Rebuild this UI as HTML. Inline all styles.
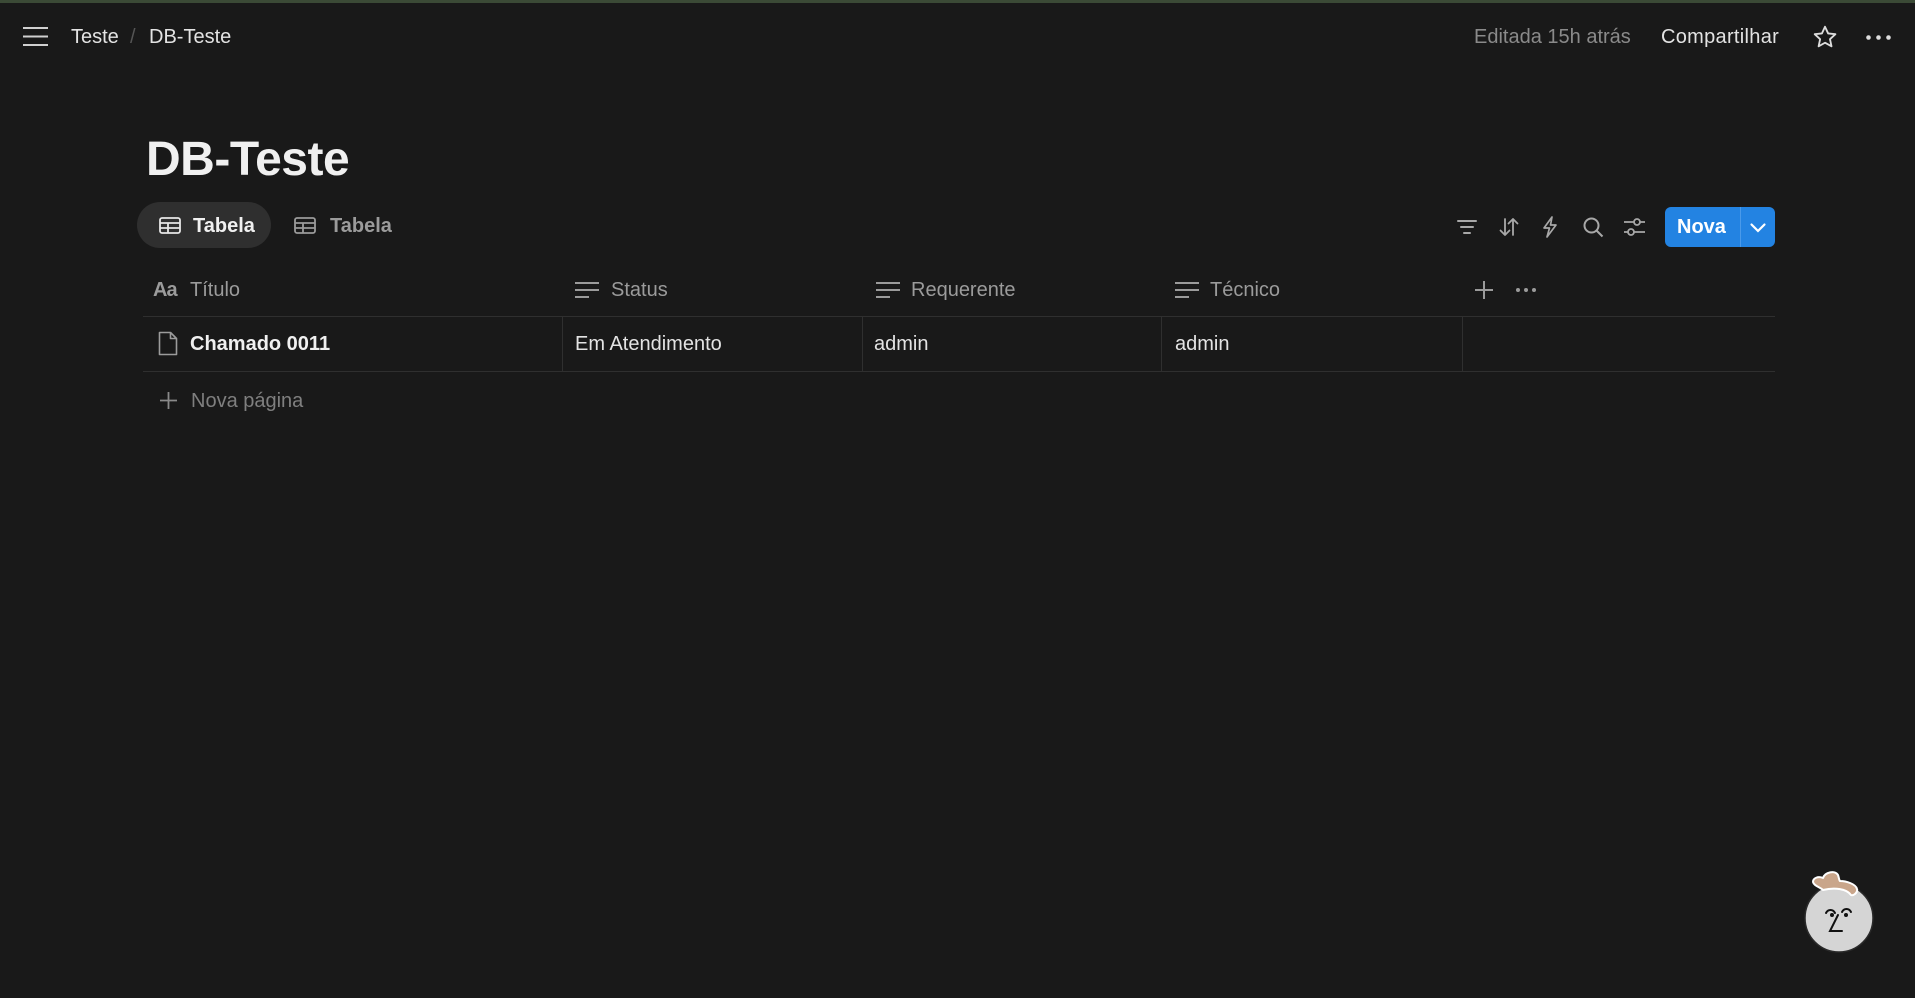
<!DOCTYPE html>
<html><head><meta charset="utf-8"><style>
*{margin:0;padding:0;box-sizing:border-box}
body{width:1915px;height:998px;background:#191919;font-family:"Liberation Sans",sans-serif;color:#e3e3e3;position:relative;overflow:hidden}
.a{position:absolute;white-space:nowrap}
.g{color:#9b9b9b}
svg{position:absolute;overflow:visible}
.vl{position:absolute;top:316px;height:55px;width:1px;background:#2f2f2f}
</style></head><body>
<div class="a" style="left:0;top:0;width:1915px;height:3px;background:#3b4a36"></div>
<svg style="left:23px;top:27px" width="25" height="19"><g stroke="#d0d0d0" stroke-width="2"><line x1="0" y1="1" x2="25" y2="1"/><line x1="0" y1="9.5" x2="25" y2="9.5"/><line x1="0" y1="18" x2="25" y2="18"/></g></svg>
<div class="a" style="left:71px;top:25px;font-size:20px;line-height:24px">Teste</div>
<div class="a" style="left:130px;top:25px;font-size:20px;line-height:24px;color:#555">/</div>
<div class="a" style="left:149px;top:25px;font-size:20px;line-height:24px">DB-Teste</div>
<div class="a g" style="left:1474px;top:25px;font-size:20px;line-height:24px;color:#8a8a8a">Editada 15h atrás</div>
<div class="a" style="left:1661px;top:25px;font-size:20px;line-height:24px;letter-spacing:0.3px">Compartilhar</div>
<svg style="left:1812px;top:24px" width="26" height="26" viewBox="0 0 24 24"><path d="M12 2.5l2.9 6.2 6.7.7-5 4.6 1.4 6.6L12 17.3l-5.9 3.3 1.4-6.6-5-4.6 6.7-.7z" fill="none" stroke="#ddd" stroke-width="1.7" stroke-linejoin="round"/></svg>
<svg style="left:1866px;top:35px" width="26" height="5"><g fill="#ddd"><circle cx="2.5" cy="2.5" r="2.3"/><circle cx="12.5" cy="2.5" r="2.3"/><circle cx="22.5" cy="2.5" r="2.3"/></g></svg>

<div class="a" style="left:146px;top:131px;font-size:48px;line-height:58px;font-weight:bold;color:#f0f0f0;letter-spacing:-0.5px">DB-Teste</div>

<div class="a" style="left:137px;top:202px;width:134px;height:46px;border-radius:23px;background:#2f2f2f"></div>
<svg style="left:159px;top:217px" width="22" height="17"><g fill="none" stroke="#e6e6e6" stroke-width="1.8"><rect x="1" y="1" width="20" height="15" rx="2"/><line x1="1" y1="6" x2="21" y2="6"/><line x1="1" y1="11" x2="21" y2="11"/><line x1="9" y1="6" x2="9" y2="16"/></g></svg>
<div class="a" style="left:193px;top:214px;font-size:20px;line-height:24px;font-weight:bold;color:#f0f0f0">Tabela</div>
<svg style="left:294px;top:217px" width="22" height="17"><g fill="none" stroke="#9b9b9b" stroke-width="1.8"><rect x="1" y="1" width="20" height="15" rx="2"/><line x1="1" y1="6" x2="21" y2="6"/><line x1="1" y1="11" x2="21" y2="11"/><line x1="9" y1="6" x2="9" y2="16"/></g></svg>
<div class="a g" style="left:330px;top:214px;font-size:20px;line-height:24px;font-weight:bold">Tabela</div>

<svg style="left:1457px;top:218px" width="20" height="18"><g stroke="#a8a8a8" stroke-width="2" stroke-linecap="round"><line x1="1" y1="3" x2="19" y2="3"/><line x1="4" y1="9" x2="16" y2="9"/><line x1="7" y1="15" x2="13" y2="15"/></g></svg>
<svg style="left:1499px;top:217px" width="20" height="20"><g fill="none" stroke="#a8a8a8" stroke-width="1.8" stroke-linecap="round" stroke-linejoin="round"><path d="M6 2v16M1.5 13.5L6 18l4.5-4.5"/><path d="M14 18V2M9.5 6.5L14 2l4.5 4.5"/></g></svg>
<svg style="left:1542px;top:216px" width="16" height="22"><path d="M10 1L2 12h5.5L5 21l9-12H8.5z" fill="none" stroke="#a8a8a8" stroke-width="1.7" stroke-linejoin="round"/></svg>
<svg style="left:1583px;top:217px" width="21" height="21"><g fill="none" stroke="#a8a8a8" stroke-width="2"><circle cx="8.5" cy="8.5" r="7"/><line x1="13.5" y1="13.5" x2="19.5" y2="19.5"/></g></svg>
<svg style="left:1624px;top:217px" width="21" height="20"><g fill="none" stroke="#a8a8a8" stroke-width="1.8"><line x1="0" y1="5" x2="21" y2="5"/><line x1="0" y1="15" x2="21" y2="15"/><circle cx="13" cy="5" r="3" fill="#191919"/><circle cx="7" cy="15" r="3" fill="#191919"/></g></svg>
<div class="a" style="left:1665px;top:207px;width:110px;height:40px;border-radius:6px;background:#2383e2"></div>
<div class="a" style="left:1740px;top:207px;width:1px;height:40px;background:#4a9aea"></div>
<div class="a" style="left:1677px;top:215px;font-size:20px;line-height:24px;font-weight:bold;color:#fff">Nova</div>
<svg style="left:1750px;top:223px" width="16" height="10"><path d="M1.5 1.5L8 8l6.5-6.5" fill="none" stroke="#fff" stroke-width="2.2" stroke-linecap="round"/></svg>

<div class="a" style="left:143px;top:316px;width:1632px;height:1px;background:#2f2f2f"></div>
<div class="a" style="left:143px;top:371px;width:1632px;height:1px;background:#2f2f2f"></div>
<div class="vl" style="left:562px"></div><div class="vl" style="left:862px"></div><div class="vl" style="left:1161px"></div><div class="vl" style="left:1462px"></div>

<div class="a g" style="left:153px;top:278px;font-size:20px;line-height:24px;font-weight:bold;letter-spacing:-1px">Aa</div>
<div class="a g" style="left:190px;top:278px;font-size:20px;line-height:24px">Título</div>
<svg style="left:575px;top:281px" width="24" height="18"><g stroke="#9b9b9b" stroke-width="2"><line x1="0" y1="2" x2="24" y2="2"/><line x1="0" y1="9" x2="24" y2="9"/><line x1="0" y1="16" x2="14" y2="16"/></g></svg>
<div class="a g" style="left:611px;top:278px;font-size:20px;line-height:24px">Status</div>
<svg style="left:876px;top:281px" width="24" height="18"><g stroke="#9b9b9b" stroke-width="2"><line x1="0" y1="2" x2="24" y2="2"/><line x1="0" y1="9" x2="24" y2="9"/><line x1="0" y1="16" x2="14" y2="16"/></g></svg>
<div class="a g" style="left:911px;top:278px;font-size:20px;line-height:24px">Requerente</div>
<svg style="left:1175px;top:281px" width="24" height="18"><g stroke="#9b9b9b" stroke-width="2"><line x1="0" y1="2" x2="24" y2="2"/><line x1="0" y1="9" x2="24" y2="9"/><line x1="0" y1="16" x2="14" y2="16"/></g></svg>
<div class="a g" style="left:1210px;top:278px;font-size:20px;line-height:24px">Técnico</div>
<svg style="left:1475px;top:281px" width="18" height="18"><g stroke="#9b9b9b" stroke-width="2"><line x1="9" y1="0" x2="9" y2="18"/><line x1="0" y1="9" x2="18" y2="9"/></g></svg>
<svg style="left:1516px;top:288px" width="20" height="4"><g fill="#9b9b9b"><circle cx="2" cy="2" r="2"/><circle cx="10" cy="2" r="2"/><circle cx="18" cy="2" r="2"/></g></svg>

<svg style="left:158px;top:331px" width="20" height="25"><path d="M1.5 1.5h11l6 6v16h-17z M12.5 1.5v6h6" fill="none" stroke="#9b9b9b" stroke-width="1.6" stroke-linejoin="round"/></svg>
<div class="a" style="left:190px;top:332px;font-size:20px;line-height:24px;font-weight:bold;color:#f0f0f0">Chamado 0011</div>
<div class="a" style="left:575px;top:332px;font-size:20px;line-height:24px">Em Atendimento</div>
<div class="a" style="left:874px;top:332px;font-size:20px;line-height:24px">admin</div>
<div class="a" style="left:1175px;top:332px;font-size:20px;line-height:24px">admin</div>

<svg style="left:160px;top:392px" width="17" height="17"><g stroke="#8a8a8a" stroke-width="1.8"><line x1="8.5" y1="0" x2="8.5" y2="17"/><line x1="0" y1="8.5" x2="17" y2="8.5"/></g></svg>
<div class="a" style="left:191px;top:389px;font-size:20px;line-height:24px;color:#7f7f7f">Nova página</div>

<svg style="left:1800px;top:866px" width="80" height="96">
<circle cx="39" cy="52" r="34" fill="#d5d5d5" stroke="#2a2a2a" stroke-width="1.5"/>
<path d="M13 16c0-4 5-6 10-4 2-6 12-8 15-3 1 3 1 5 2 6 6 0 16 3 17 8 1 4-4 7-6 6-4-6-16-8-28-5-3-3-9-4-10-8z" fill="#c9a58a" stroke="#fff" stroke-width="2" stroke-linejoin="round"/>
<path d="M26 47c2-4 7-4 9 0M42 46c2-4 7-4 9 0M38 49l-8 16h12" fill="none" stroke="#111" stroke-width="2" stroke-linecap="round"/><circle cx="32" cy="49" r="2" fill="#111"/><circle cx="46" cy="49" r="2" fill="#111"/></svg>
</body></html>
